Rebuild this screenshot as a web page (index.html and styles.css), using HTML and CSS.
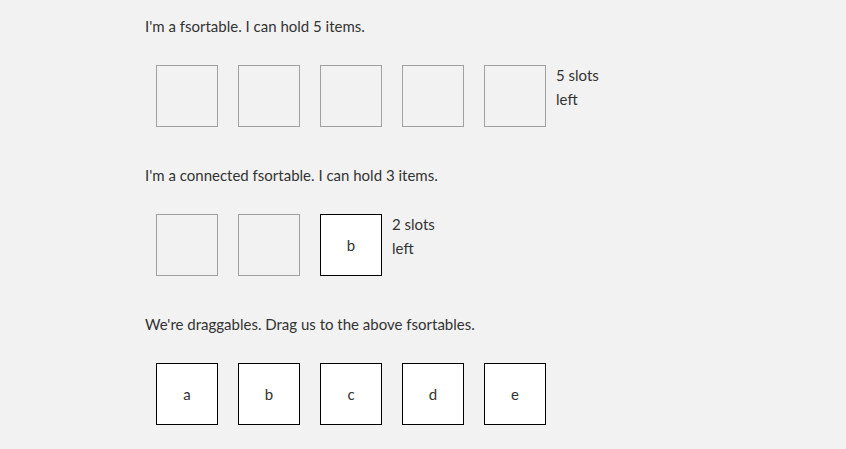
FILE: index.html
```html
<!DOCTYPE html>
<html lang="en">
<head>
    <meta charset="UTF-8">
    <title>fsortable demo</title>
    <link rel="stylesheet" href="styles.css">
</head>
<body>

<div class="demo">
    <div class="section">
        <p class="caption">I'm a fsortable. I can hold 5 items.</p>
        <div class="row">
            <div class="slot"></div>
            <div class="slot"></div>
            <div class="slot"></div>
            <div class="slot"></div>
            <div class="slot"></div>
            <div class="slots-left">5 slots<br>left</div>
        </div>
    </div>

    <div class="section">
        <p class="caption">I'm a connected fsortable. I can hold 3 items.</p>
        <div class="row">
            <div class="slot"></div>
            <div class="slot"></div>
            <div class="slot item">b</div>
            <div class="slots-left">2 slots<br>left</div>
        </div>
    </div>

    <div class="section">
        <p class="caption">We're draggables. Drag us to the above fsortables.</p>
        <div class="row">
            <div class="slot item">a</div>
            <div class="slot item">b</div>
            <div class="slot item">c</div>
            <div class="slot item">d</div>
            <div class="slot item">e</div>
        </div>
    </div>
</div>

</body>
</html>
```

FILE: styles.css
```css
* { box-sizing: border-box; margin: 0; padding: 0 }
body {
    font-family: Lato, "Open Sans", sans-serif;
    font-size: 15px;
    line-height: 24px;
    background: #f2f2f2;
    color: #333;
}
.demo {
    padding: 14px 0 0 145px;
}
.section {
    height: 149px;
}
.caption {
    margin-bottom: 27px;
}
.row {
    display: flex;
    align-items: flex-start;
    gap: 20px;
    padding-left: 11px;
}
.slot {
    width: 62px;
    height: 62px;
    border: 1px solid #a0a0a0;
    display: flex;
    align-items: center;
    justify-content: center;
}
.slot.item {
    background: #fff;
    border-color: #000;
}
/* counter sits tight against the last slot */
.slots-left {
    margin: -2px 0 0 -10px;
}
```
